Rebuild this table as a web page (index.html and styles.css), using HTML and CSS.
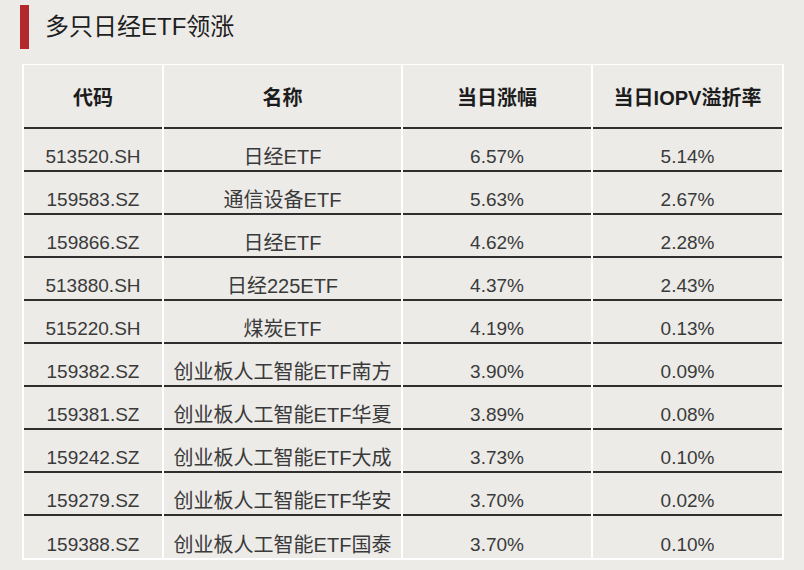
FILE: index.html
```html
<!DOCTYPE html>
<html lang="zh-CN">
<head>
<meta charset="utf-8">
<title>多只日经ETF领涨</title>
<link rel="stylesheet" href="styles.css">
</head>
<body>
<div class="page">
  <div class="title">
    <span class="title-bar"></span>
    <h1 class="title-text">多只日经ETF领涨</h1>
  </div>
  <table class="etf">
    <colgroup>
      <col class="c1"><col class="c2"><col class="c3"><col class="c4">
    </colgroup>
    <thead>
      <tr><th>代码</th><th>名称</th><th>当日涨幅</th><th>当日IOPV溢折率</th></tr>
    </thead>
    <tbody>
      <tr><td>513520.SH</td><td class="name">日经ETF</td><td>6.57%</td><td>5.14%</td></tr>
      <tr><td>159583.SZ</td><td class="name">通信设备ETF</td><td>5.63%</td><td>2.67%</td></tr>
      <tr><td>159866.SZ</td><td class="name">日经ETF</td><td>4.62%</td><td>2.28%</td></tr>
      <tr><td>513880.SH</td><td class="name">日经225ETF</td><td>4.37%</td><td>2.43%</td></tr>
      <tr><td>515220.SH</td><td class="name">煤炭ETF</td><td>4.19%</td><td>0.13%</td></tr>
      <tr><td>159382.SZ</td><td class="name">创业板人工智能ETF南方</td><td>3.90%</td><td>0.09%</td></tr>
      <tr><td>159381.SZ</td><td class="name">创业板人工智能ETF华夏</td><td>3.89%</td><td>0.08%</td></tr>
      <tr><td>159242.SZ</td><td class="name">创业板人工智能ETF大成</td><td>3.73%</td><td>0.10%</td></tr>
      <tr><td>159279.SZ</td><td class="name">创业板人工智能ETF华安</td><td>3.70%</td><td>0.02%</td></tr>
      <tr class="last"><td>159388.SZ</td><td class="name">创业板人工智能ETF国泰</td><td>3.70%</td><td>0.10%</td></tr>
    </tbody>
  </table>
</div>
</body>
</html>
```

FILE: styles.css
```css
html, body {
  margin: 0;
  padding: 0;
  background: #ecebe8;
}
body {
  width: 804px;
  height: 570px;
  overflow: hidden;
  font-family: "Liberation Sans", "Noto Sans CJK SC", sans-serif;
}
.page {
  padding: 5px 0 0 20px;
}
.title {
  display: flex;
  align-items: center;
  height: 44px;
}
.title-bar {
  width: 9px;
  height: 44px;
  background: #b3282b;
  flex: none;
}
.title-text {
  margin: 0 0 0 16px;
  font-size: 24px;
  font-weight: normal;
  color: #1e1e1e;
  line-height: 44px;
}
.etf {
  margin: 15px 0 0 2px;
  width: 762px;
  table-layout: fixed;
  border-collapse: separate;
  border-spacing: 2px 0;
  background: #ffffff;
  border-top: 1px solid #ffffff;
  border-bottom: 2px solid #ffffff;
}
.c1 { width: 138px; }
.c2 { width: 237px; }
.c3 { width: 188px; }
.c4 { width: 189px; }
.etf th, .etf td {
  background: #ecebe8;
  text-align: center;
  padding: 0;
}
.etf th {
  height: 62px;
  font-size: 20px;
  font-weight: bold;
  color: #1c1c1c;
  border-bottom: 2px solid #2e2e2e;
  vertical-align: middle;
}
.etf td {
  height: 40px;
  box-sizing: content-box;
  font-size: 19px;
  color: #3a3a3a;
  border-bottom: 2px solid #2e2e2e;
  vertical-align: bottom;
  line-height: 24px;
  padding-bottom: 1px;
}
.etf td.name {
  font-size: 20px;
}
.etf tr.last td {
  border-bottom: none;
  height: 41px;
}
```
